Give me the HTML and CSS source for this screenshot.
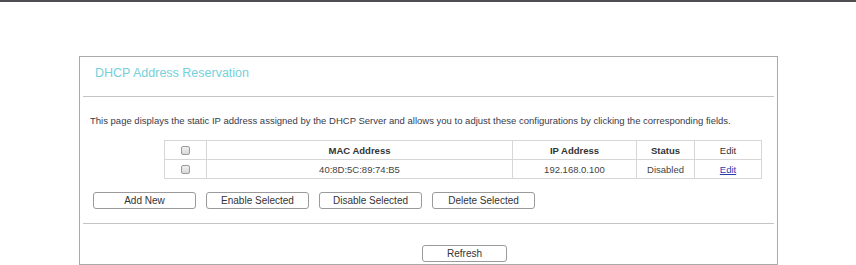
FILE: index.html
```html
<!DOCTYPE html>
<html lang="en">
<head>
    <meta charset="UTF-8">
    <title>DHCP Address Reservation</title>
    <link rel="stylesheet" href="styles.css">
</head>
<body>
<div class="topbar"></div>
<div class="page">
    <div class="panel">
        <div class="panel-title">DHCP Address Reservation</div>
        <div class="divider"></div>
        <p class="intro">This page displays the static IP address assigned by the DHCP Server and allows you to adjust these configurations by clicking the corresponding fields.</p>
        <table class="list">
            <tr>
                <th class="col-check"><input type="checkbox"></th>
                <th class="col-mac">MAC Address</th>
                <th class="col-ip">IP Address</th>
                <th class="col-status">Status</th>
                <th class="col-edit">Edit</th>
            </tr>
            <tr>
                <td><input type="checkbox"></td>
                <td>40:8D:5C:89:74:B5</td>
                <td>192.168.0.100</td>
                <td>Disabled</td>
                <td><a href="#">Edit</a></td>
            </tr>
        </table>
        <div class="actions">
            <button>Add New</button>
            <button>Enable Selected</button>
            <button>Disable Selected</button>
            <button>Delete Selected</button>
        </div>
        <div class="divider"></div>
        <div class="footer">
            <button class="refresh">Refresh</button>
        </div>
    </div>
</div>
</body>
</html>
```

FILE: styles.css
```css
body {
    margin: 0;
    font-family: 'Liberation Sans', Arial, sans-serif;
    background: #fff;
    color: #333;
}

.topbar {
    height: 2px;
    background: #4d4f53;
}

.page {
    padding: 54px 0 0 79px;
}

.panel {
    width: 697px;
    height: 207px;
    border: 1px solid #aaa;
}

.panel-title {
    height: 39px;
    line-height: 33px;
    padding-left: 15px;
    font-size: 12.5px;
    color: #74d0db;
}

.divider {
    height: 1px;
    margin: 0 3px;
    background: #c4c4c4;
}

.intro {
    margin: 18px 0 0 10px;
    font-size: 9.5px;
    line-height: 12px;
    color: #3a3a4a;
}

.list {
    margin: 13px 0 0 84px;
    border-collapse: collapse;
    font-size: 9.5px;
}

.list th,
.list td {
    height: 18px;
    padding: 0;
    border: 1px solid #d6d6d6;
    text-align: center;
    color: #444;
}

.list th {
    font-weight: bold;
    color: #333;
}

.list th.col-edit {
    font-weight: normal;
}

.col-check { width: 41px; }
.col-mac { width: 305px; }
.col-ip { width: 123px; }
.col-status { width: 57px; }
.col-edit { width: 66px; }

.list a {
    color: #2a3bb0;
}

.list input {
    appearance: none;
    width: 9px;
    height: 9px;
    margin: 0;
    vertical-align: middle;
    border: 1px solid #9c9c9c;
    border-radius: 2px;
    background: linear-gradient(#f0f0f0, #d8d8d8);
}

.actions {
    display: flex;
    gap: 10px;
    margin: 13px 0 14px 13px;
}

button {
    height: 17px;
    padding: 0;
    font-family: inherit;
    font-size: 10px;
    color: #333;
    background: #fff;
    border: 1px solid #9a9a9a;
    border-radius: 3px;
}

.actions button {
    width: 103px;
}

.footer {
    padding: 19px 0 0 342px;
}

.refresh {
    width: 85px;
}
```
